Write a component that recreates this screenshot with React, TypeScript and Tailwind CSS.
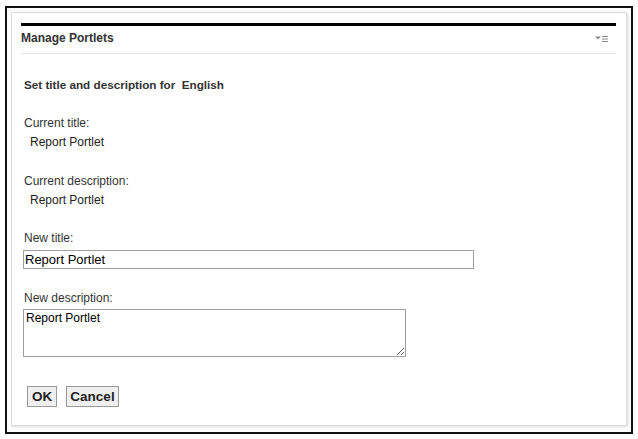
import { useState } from "react";

function MenuIcon() {
  return (
    <svg width="13" height="8" viewBox="0 0 13 8" className="mt-[4px] text-[#8a8a8a]">
      <path d="M0 1.5h6L3 4.5z" fill="currentColor" />
      <rect x="7" y="1" width="6" height="1" fill="currentColor" />
      <rect x="7" y="3.5" width="6" height="1" fill="currentColor" />
      <rect x="7" y="6" width="6" height="1" fill="currentColor" />
    </svg>
  );
}

export default function App() {
  const [title, setTitle] = useState("Report Portlet");
  const [description, setDescription] = useState("Report Portlet");

  return (
    <div className="h-[439px] w-[638px] bg-white pl-[5px] pt-[6px] font-['Liberation_Sans',Arial,sans-serif] text-[12px] text-[#333]">
      <div className="h-[428px] w-[628px] border-2 border-[#111] p-[4px]">
        <div className="h-[414px] w-[616px] border border-[#dcdcdc] pl-[9px] pr-[10px] pt-[10px] shadow-[1px_1px_3px_rgba(0,0,0,0.15)]">
          <div className="h-[3px] bg-black" />
          <div className="flex h-[28px] items-start justify-between border-b border-[#e6e6e6] pr-[8px] pt-[5px]">
            <span className="text-[12px] font-bold leading-[14px]">Manage Portlets</span>
            <MenuIcon />
          </div>

          <div className="flex flex-col pl-[3px] leading-[14px]">
            <p className="mt-[24px] text-[11.7px] font-bold">Set title and description for&nbsp; English</p>

            <p className="mt-[24px]">Current title:</p>
            <p className="mt-[5px] pl-[6px] text-[#222]">Report Portlet</p>

            <p className="mt-[25px]">Current description:</p>
            <p className="mt-[5px] pl-[6px] text-[#222]">Report Portlet</p>

            <label className="mt-[24px]">New title:</label>
            <input
              value={title}
              onChange={(e) => setTitle(e.target.value)}
              className="-ml-[1px] mt-[5px] h-[19px] w-[451px] border border-[#a0a0a0] px-[1px] text-[13px] leading-[17px] text-black outline-none"
            />

            <label className="mt-[22px]">New description:</label>
            <textarea
              value={description}
              onChange={(e) => setDescription(e.target.value)}
              className="-ml-[1px] mt-[4px] h-[48px] w-[383px] border border-[#a0a0a0] px-[2px] py-[1px] text-[12px] leading-[14px] text-black outline-none"
            />

            <div className="mt-[29px] flex gap-[9px] pl-[3px]">
              <button className="h-[21px] w-[30px] border border-[#9a9a9a] bg-[#efefef] text-[13.5px] font-bold leading-none text-[#222]">
                OK
              </button>
              <button className="h-[21px] w-[53px] border border-[#9a9a9a] bg-[#efefef] text-[13.5px] font-bold leading-none text-[#222]">
                Cancel
              </button>
            </div>
          </div>
        </div>
      </div>
    </div>
  );
}
